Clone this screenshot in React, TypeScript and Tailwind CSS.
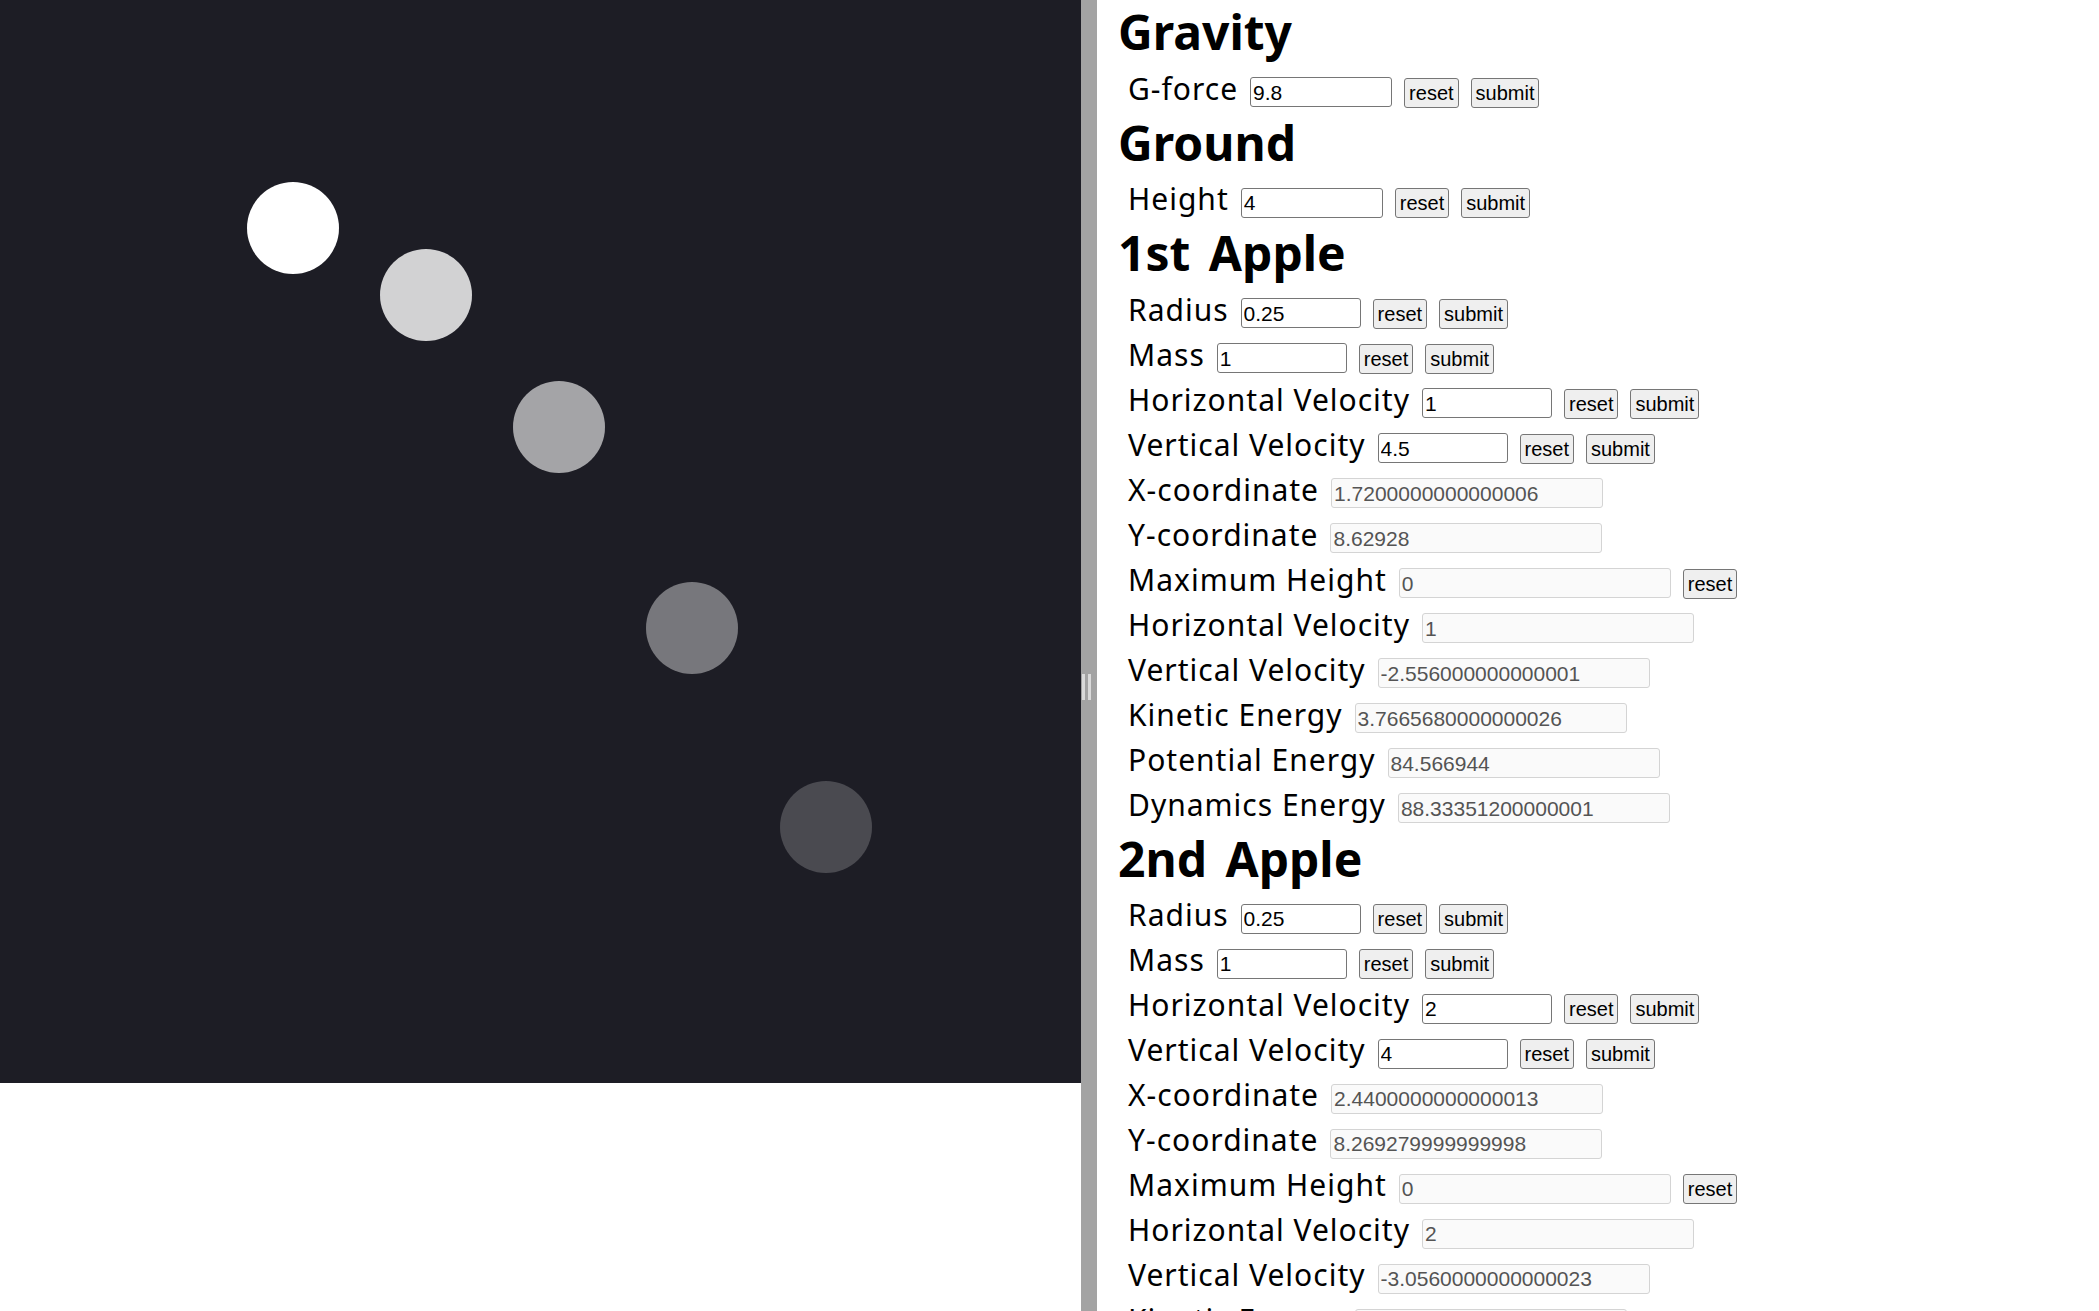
import React from "react";

type Row = {
  label: string;
  value: string;
  width: string;
  editable?: boolean;
  reset?: boolean;
};

type Section = {
  title: string;
  rows: Row[];
};

const readonly = "w-[272px]";

const sections: Section[] = [
  {
    title: "Gravity",
    rows: [{ label: "G-force", value: "9.8", width: "w-[142px]", editable: true }],
  },
  {
    title: "Ground",
    rows: [{ label: "Height", value: "4", width: "w-[142px]", editable: true }],
  },
  {
    title: "1st Apple",
    rows: [
      { label: "Radius", value: "0.25", width: "w-[120px]", editable: true },
      { label: "Mass", value: "1", width: "w-[130px]", editable: true },
      { label: "Horizontal Velocity", value: "1", width: "w-[130px]", editable: true },
      { label: "Vertical Velocity", value: "4.5", width: "w-[130px]", editable: true },
      { label: "X-coordinate", value: "1.7200000000000006", width: readonly },
      { label: "Y-coordinate", value: "8.62928", width: readonly },
      { label: "Maximum Height", value: "0", width: readonly, reset: true },
      { label: "Horizontal Velocity", value: "1", width: readonly },
      { label: "Vertical Velocity", value: "-2.556000000000001", width: readonly },
      { label: "Kinetic Energy", value: "3.7665680000000026", width: readonly },
      { label: "Potential Energy", value: "84.566944", width: readonly },
      { label: "Dynamics Energy", value: "88.33351200000001", width: readonly },
    ],
  },
  {
    title: "2nd Apple",
    rows: [
      { label: "Radius", value: "0.25", width: "w-[120px]", editable: true },
      { label: "Mass", value: "1", width: "w-[130px]", editable: true },
      { label: "Horizontal Velocity", value: "2", width: "w-[130px]", editable: true },
      { label: "Vertical Velocity", value: "4", width: "w-[130px]", editable: true },
      { label: "X-coordinate", value: "2.4400000000000013", width: readonly },
      { label: "Y-coordinate", value: "8.269279999999998", width: readonly },
      { label: "Maximum Height", value: "0", width: readonly, reset: true },
      { label: "Horizontal Velocity", value: "2", width: readonly },
      { label: "Vertical Velocity", value: "-3.0560000000000023", width: readonly },
      { label: "Kinetic Energy", value: "6.669568000000003", width: readonly },
      { label: "Potential Energy", value: "81.038944", width: readonly },
      { label: "Dynamics Energy", value: "87.70851200000001", width: readonly },
    ],
  },
];

// trail of the falling apple, newest first
const trail = [
  { pos: "left-[247px] top-[182px]", color: "bg-white" },
  { pos: "left-[380px] top-[249px]", color: "bg-white/80" },
  { pos: "left-[513px] top-[381px]", color: "bg-white/60" },
  { pos: "left-[646px] top-[582px]", color: "bg-white/40" },
  { pos: "left-[780px] top-[781px]", color: "bg-white/20" },
];

function Btn({ children }: { children: React.ReactNode }) {
  return (
    <button className="ml-[12px] h-[30px] rounded-[3px] border border-[#767676] bg-[#efefef] px-[4px] font-['Liberation_Sans',Arial,sans-serif] text-[20px] leading-[26px] text-black">
      {children}
    </button>
  );
}

function FieldRow({ row }: { row: Row }) {
  return (
    <div className="flex h-[45px] items-baseline pl-[10px] pt-[3px]">
      <span className="whitespace-nowrap text-[30px] leading-[30px] tracking-[1px] text-black">
        {row.label}
      </span>
      <input
        readOnly={!row.editable}
        defaultValue={row.value}
        className={`ml-[12px] h-[30px] ${row.width} rounded-[3px] border pl-[2px] pr-[3px] font-['Liberation_Sans',Arial,sans-serif] text-[21px] outline-none ${
          row.editable
            ? "border-[#767676] bg-white text-black"
            : "border-[#d4d4d4] bg-[#fafafa] text-[#545454]"
        }`}
      />
      {(row.editable || row.reset) && <Btn>reset</Btn>}
      {row.editable && <Btn>submit</Btn>}
    </div>
  );
}

export default function App() {
  return (
    <div className="flex h-[1311px] w-full overflow-hidden bg-white font-['Noto_Sans',sans-serif]">
      <div className="flex w-[1081px] shrink-0 flex-col">
        <div className="relative h-[1083px] bg-[#1d1d25]">
          {trail.map((b, i) => (
            <div key={i} className={`absolute h-[92px] w-[92px] rounded-full ${b.pos} ${b.color}`} />
          ))}
        </div>
      </div>

      <div className="flex w-[16px] shrink-0 flex-col bg-[#a3a3a3] pl-[1px] pt-[674px]">
        <div className="flex gap-[3px]">
          <div className="h-[26px] w-[3px] bg-[#dadada]" />
          <div className="h-[26px] w-[3px] bg-[#dadada]" />
        </div>
      </div>

      <div className="min-w-0 flex-1 overflow-hidden pl-[21px] pt-[5px]">
        {sections.map((s) => (
          <section key={s.title}>
            <h1 className="pb-[11.5px] text-[48px] font-bold leading-[54px] text-black [word-spacing:6px]">
              {s.title}
            </h1>
            {s.rows.map((r, i) => (
              <FieldRow key={i} row={r} />
            ))}
          </section>
        ))}
      </div>
    </div>
  );
}
